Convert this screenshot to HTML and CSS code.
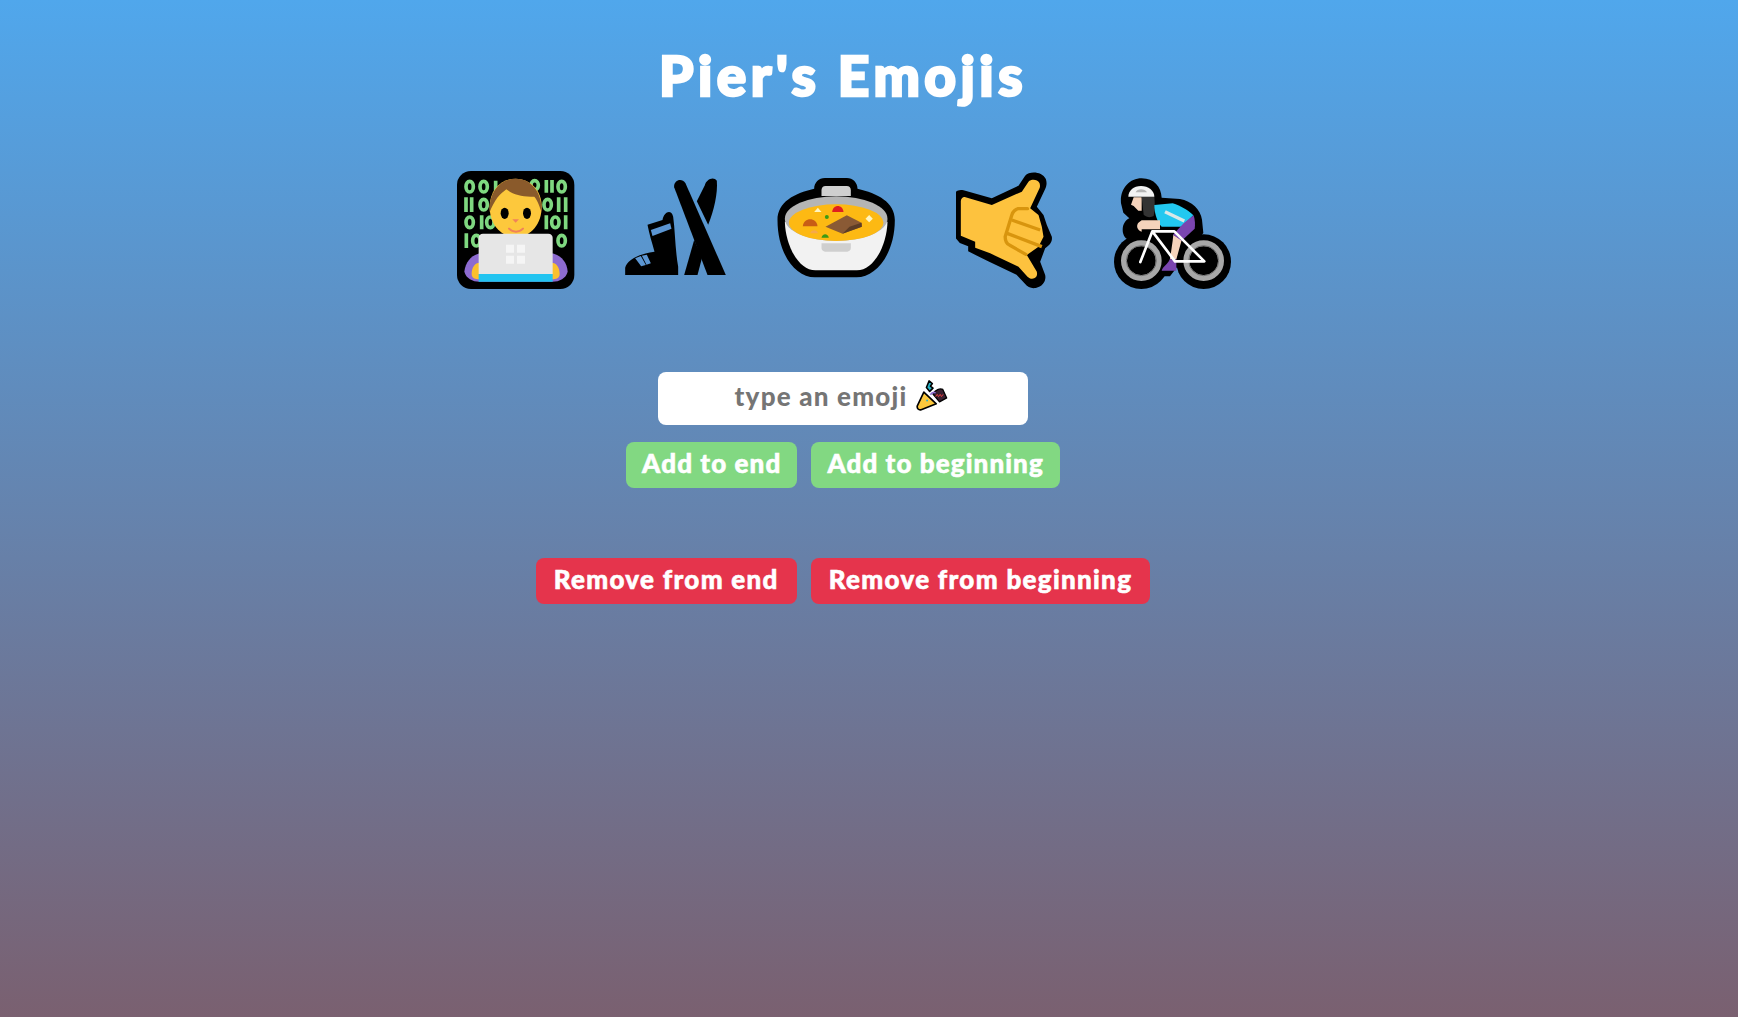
FILE: index.html
```html
<!DOCTYPE html>
<html lang="en">
<head>
  <meta charset="UTF-8">
  <meta name="viewport" content="width=device-width, initial-scale=1.0" />
  <title>Pier's Emojis</title>
  <link rel="stylesheet" href="styles.css">
</head>
<body>
  <main class="app">
    <h1>Pier's Emojis</h1>

    <div class="emojis">
      <!-- technologist -->
      <svg class="emoji emoji-tech" viewBox="50 33 354 357" role="img" aria-label="technologist">
        <rect x="50" y="33" width="352" height="354" rx="42" fill="#000"/>
        <g fill="none" stroke="#7fd880" stroke-width="11">
          <ellipse cx="88" cy="80" rx="11" ry="16"/><ellipse cx="130" cy="80" rx="11" ry="16"/>
          <ellipse cx="283" cy="76" rx="11" ry="14"/><ellipse cx="364" cy="80" rx="11" ry="16"/>
          <ellipse cx="130" cy="134" rx="11" ry="16"/><ellipse cx="322" cy="134" rx="11" ry="16"/>
          <ellipse cx="88" cy="187" rx="11" ry="16"/><ellipse cx="345" cy="187" rx="11" ry="16"/>
          <ellipse cx="150" cy="187" rx="11" ry="16"/><ellipse cx="108" cy="242" rx="11" ry="16"/>
          <ellipse cx="364" cy="242" rx="11" ry="16"/>
          <path d="M166 62v36M318 60v38M335 60v38M77 112v44M94 112v44M355 112v44M376 112v44M124 166v42M318 166v42M376 166v42M78 220v44"/>
        </g>
        <path d="M72 335c4-32 24-52 50-55h210c28 3 48 25 50 55c-5 20-25 30-45 30h-220c-20 0-40-10-45-30z" fill="#8d6bd0"/>
        <path d="M94 342c0-20 10-34 24-34v50c-14 0-24-4-24-16zM358 342c0-20-10-34-24-34v50c14 0 24-4 24-16z" fill="#fbc02d"/>
        <path d="M148 140c0-50 35-84 78-84s78 34 78 84c0 50-30 90-78 90s-78-40-78-90z" fill="#fdc83c"/>
        <path d="M148 156c-4-56 30-100 78-100s80 42 78 100c-6-14-10-32-22-46c-36 2-64-6-84-22c-10 8-18 14-26 24c-10 14-18 30-24 44z" fill="#8a5a2b"/>
        <ellipse cx="193" cy="160" rx="12" ry="17" fill="#000"/>
        <ellipse cx="260" cy="160" rx="12" ry="17" fill="#000"/>
        <path d="M216 178h20l-10 10z" fill="#f0825a"/>
        <path d="M206 206c12 12 30 12 42 0" fill="none" stroke="#f0825a" stroke-width="6" stroke-linecap="round"/>
        <path d="M115 234c0-8 5-13 13-13h196c8 0 13 5 13 13v108h-222z" fill="#e6e6e6"/>
        <path d="M115 342h222v23h-222z" fill="#22c4f0"/>
        <path d="M197 254h24v24h-24zM230 254h24v24h-24zM197 287h24v24h-24zM230 287h24v24h-24z" fill="#f5f5f5"/>
      </svg>

      <!-- ski and boot -->
      <svg class="emoji emoji-ski" viewBox="553 33 302 357" role="img" aria-label="skis">
        <path d="M700 82c-3-20 22-32 34-12l121 275h-55z" fill="#000"/>
        <path d="M792 76c4-18 26-28 36-14c3 38-8 88-26 132l-34-70z" fill="#000"/>
        <path d="M760 240l24 52-14 53h-40z" fill="#000"/>
        <path d="M620 194l45-14c4-24 26-34 32-10c6 44 6 100 15 150v25h-159v-22c5-22 40-42 88-48c-8-30-16-54-21-81z" fill="#000"/>
        <path d="M630 210l58-20 4 16-57 22z" fill="#5b95d2"/>
        <path d="M583 295l17-7 15 27-14 4zM603 287l15-3 12 26-13 4z" fill="#5b95d2"/>
      </svg>

      <!-- pot of food -->
      <svg class="emoji emoji-pot" viewBox="107 33 353 357" role="img" aria-label="pot of food">
        <path d="M218 86c0-18 14-32 32-32h66c18 0 32 14 32 32c60 14 112 40 112 94c0 100-55 172-115 172h-125c-60 0-112-72-112-172c0-54 50-80 110-94z" fill="#000"/>
        <path d="M240 108v-18c0-7 5-12 12-12h64c7 0 12 5 12 12v18z" fill="#cfcfcf"/>
        <path d="M130 185c2 70 40 146 92 146h124c52 0 90-76 92-146z" fill="#f2f2f2"/>
        <ellipse cx="284" cy="176" rx="154" ry="67" fill="#b5b5b5"/>
        <ellipse cx="284" cy="188" rx="142" ry="55" fill="#fdb913"/>
        <path d="M240 250h88v14c0 6-5 11-11 11h-66c-6 0-11-5-11-11z" fill="#cfcfcf"/>
        <path d="M252 200l64-34 44 22 1 12-58 21z" fill="#8a5a35"/>
        <path d="M303 221l58-21-1-12-36 12z" fill="#5d3d26"/>
        <path d="M184 199c2-28 42-28 44 0z" fill="#c85d15"/>
        <path d="M272 156c2-24 32-24 34 0z" fill="#e01f1f"/>
        <path d="M218 156l11-13 11 13z" fill="#fff5c0"/>
        <path d="M372 176l11-11 11 11-11 11z" fill="#fff5c0"/>
        <circle cx="256" cy="171" r="6" fill="#3a9a14"/>
        <path d="M240 233c2-14 20-14 22 0z" fill="#3a9a14"/>
        <path d="M206 220c3-12 20-12 24 0z" fill="#f6a94a"/>
      </svg>

      <!-- call me hand -->
      <svg class="emoji emoji-hand" viewBox="28 18 287 357" role="img" aria-label="call me hand">
        <path d="M50 76l85 24 80-38 20-30c12-14 50-14 62 10c4 12 2 22-2 30l-25 53 20 25 10 30 15 35c2 14-4 24-20 35l-15 40 15 40c4 18-8 35-28 39c-14 2-24-2-34-14l-24-26-85-40-60-30v-15l-25-10-17-20v-120c0-12 10-22 28-18z" fill="#000"/>
        <path d="M56 97l79 23 90-40 20-30c8-8 26-8 33 4c2 6 2 12 0 16l-28 60 25 20 10 35 5 30-15 30-35 25 30 50c2 10 0 17-8 20c-8 3-14 0-20-5l-27-30-85-40-45-17v-18l-43-18v-104c0-8 8-14 14-11z" fill="#fdc23e"/>
        <path d="M242 131h-28c-10 2-16 10-19 19l-20 65c0 12 5 22 14 26l48 27" fill="none" stroke="#d8950e" stroke-width="10" stroke-linecap="round"/>
        <path d="M195 165l85 30M181 205l104 40" fill="none" stroke="#d8950e" stroke-width="10"/>
      </svg>

      <!-- person biking -->
      <svg class="emoji emoji-bike" viewBox="337 33 351 357" role="img" aria-label="person biking">
        <g fill="#000">
          <circle cx="419" cy="305" r="82"/>
          <circle cx="606" cy="305" r="82"/>
          <path d="M358 130c-4-42 24-75 62-75s58 26 60 58l55 4c35 6 62 32 66 62l4 40-100 130h-60l-60-110c-12 0-22-12-22-30c0-16 8-28 20-34l-18-17z"/>
        </g>
        <circle cx="419" cy="302" r="52" fill="none" stroke="#a8a8a8" stroke-width="18"/>
        <circle cx="419" cy="302" r="45" fill="none" stroke="#707070" stroke-width="3"/>
        <circle cx="606" cy="302" r="52" fill="none" stroke="#a8a8a8" stroke-width="18"/>
        <circle cx="606" cy="302" r="45" fill="none" stroke="#707070" stroke-width="3"/>
        <path d="M396 112h24v40h-10l-14-14-8-4z" fill="#f5d3bb"/>
        <path d="M420 110h38c2 22 2 42-2 58c-10 6-22 4-30-4z" fill="#333"/>
        <path d="M380 110c0-18 16-32 38-32s40 14 40 32z" fill="#f2f2f2"/>
        <path d="M402 97c4-12 28-12 34 0z" fill="#b5b5b5"/>
        <path d="M458 135l55-5c25 8 48 22 62 36l-35 34h-60c-14-14-22-42-22-65z" fill="#22c8f0"/>
        <path d="M490 155l58 28" stroke="#d8e8e8" stroke-width="10" fill="none"/>
        <path d="M420 215c-14-4-18-20-8-28l8-6h55v27h-55z" fill="#f5d3bb"/>
        <path d="M505 298l8-56 2-18 25 16-16 58z" fill="#f5d3bb"/>
        <path d="M540 242l-26-18 32-34 30-24c4 14 5 28 3 40z" fill="#7a45b0"/>
        <path d="M480 332c4-14 20-20 24-34h20v34z" fill="#7a45b0"/>
        <path d="M416 306l36-92h66l90 90h-88l-68-90" fill="none" stroke="#fff" stroke-width="8" stroke-linejoin="round" stroke-linecap="round"/>
      </svg>
    </div>

    <div class="add-box">
      <input type="text" class="emoji-input" placeholder="type an emoji" aria-label="type an emoji">
      <svg class="popper" viewBox="828 52 98 98" aria-hidden="true">
        <path d="M860 78l8-20 10 8-6 8 8 6-10 10z" fill="#27b5c9" stroke="#000" stroke-width="5" stroke-linejoin="round"/>
        <path d="M880 98c6-14 22-18 30-14l12 26-22 12z" fill="#3a2030" stroke="#000" stroke-width="4" stroke-linejoin="round"/>
        <path d="M872 100c4-6 10-8 16-6" fill="none" stroke="#8d6bd0" stroke-width="5"/>
        <path d="M888 106l5-7 4 7 5-7 4 7 5-7" fill="none" stroke="#e23c3c" stroke-width="3"/>
        <path d="M852 92l38 36-46 18c-8 2-14-4-12-12z" fill="#fdc83c" stroke="#000" stroke-width="5" stroke-linejoin="round"/>
        <circle cx="862" cy="118" r="3" fill="#27b5c9"/>
      </svg>
    </div>

    <div class="btn-row">
      <button class="btn btn-add">Add to end</button>
      <button class="btn btn-add">Add to beginning</button>
    </div>

    <div class="btn-row btn-row-remove">
      <button class="btn btn-remove">Remove from end</button>
      <button class="btn btn-remove">Remove from beginning</button>
    </div>
  </main>
</body>
</html>
```

FILE: styles.css
```css
* {
  box-sizing: border-box;
  margin: 0;
  padding: 0;
  font-family: 'Lato', 'Open Sans', sans-serif;
}

html, body {
  height: 100%;
}

body {
  background: linear-gradient(#50a7ec, #7a6070);
  overflow: hidden;
}

.app {
  width: 1686px;
  display: flex;
  flex-direction: column;
  align-items: center;
  padding-top: 43px;
}

h1 {
  font-size: 55px;
  line-height: 64px;
  font-weight: 900;
  color: #fff;
  letter-spacing: 4.5px;
  -webkit-text-stroke: 2.5px #fff;
}

.emojis {
  display: flex;
  margin-top: 64px;
  margin-left: 1px;
}

.emoji {
  height: 119px;
  display: block;
}

.emoji-tech { width: 118px; }
.emoji-ski { width: 101px; margin-left: 50px; }
.emoji-pot { width: 118px; margin-left: 51px; }
.emoji-hand { width: 96px; margin-left: 61px; }
.emoji-bike { width: 117px; margin-left: 62px; }

.add-box {
  position: relative;
  margin-top: 82px;
}

.emoji-input {
  display: block;
  width: 370px;
  height: 53px;
  border: none;
  border-radius: 8px;
  background: #fff;
  outline: none;
  text-align: center;
  font-size: 26px;
  font-weight: 900;
  letter-spacing: 1.2px;
  padding: 0 44px 5px 0;
}

.emoji-input::placeholder {
  color: #757575;
  opacity: 1;
}

.popper {
  position: absolute;
  left: 258px;
  top: 7px;
  width: 32px;
  height: 32px;
}

.btn-row {
  display: flex;
  gap: 14px;
  margin-top: 17px;
}

.btn-row-remove {
  margin-top: 70px;
}

.btn {
  height: 46px;
  padding: 0 18px 5px;
  border: none;
  border-radius: 8px;
  color: #fff;
  font-size: 26px;
  font-weight: 900;
  letter-spacing: 1.3px;
  -webkit-text-stroke: 0.6px #fff;
  cursor: pointer;
}

.btn-add {
  padding: 0 16px 5px;
  letter-spacing: 1.1px;
  background-color: #82d882;
}

.btn-remove {
  background-color: #e5344c;
}
```
